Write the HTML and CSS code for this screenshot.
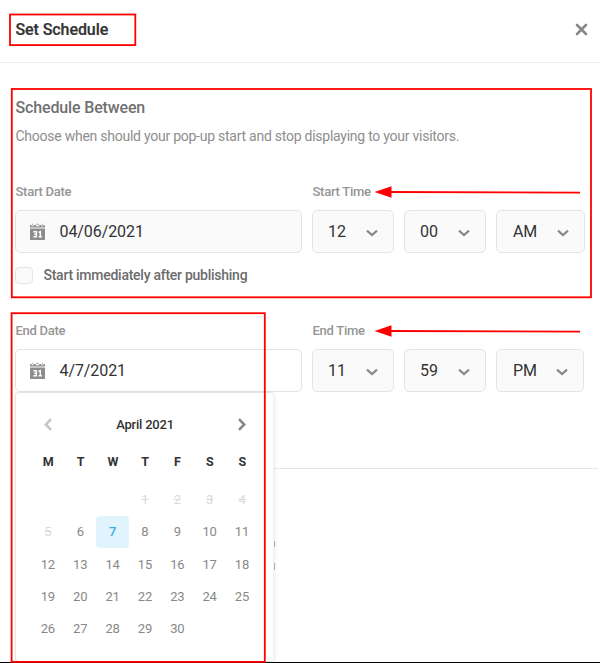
FILE: index.html
```html
<!DOCTYPE html>
<html lang="en">
<head>
<meta charset="utf-8">
<title>Set Schedule</title>
<link rel="stylesheet" href="styles.css">
</head>
<body>
<svg class="defs" width="0" height="0" aria-hidden="true">
  <symbol id="calendar" viewBox="0 0 15 17">
    <path fill="#8d8d8d" d="M0 5.500h15v11.500H0zM0 2h1.600v1.200h2V2h2.200v1.200h3.400V2h2.200v1.200h2V2H15v2.500H0z"/>
    <path fill="none" stroke="#999" stroke-width=".8" d="M2.600 2.400V.6M12.400 2.400V.6M6 1.300h3"/>
    <path fill="none" stroke="#fff" stroke-width="1.400" d="M3.400 8.800h3v5h-3M4.300 11.200h2M8.600 9.500l1.700-.8v5.200M8.700 13.800h3.200"/>
  </symbol>
  <symbol id="chevron" viewBox="0 0 12 8">
    <path fill="none" stroke="#888" stroke-width="2.200" d="M1 1.700l5 4.300 5-4.300"/>
  </symbol>
</svg>
<main class="dialog">
  <header class="head">
    <h1>Set Schedule</h1>
    <svg class="close" width="13" height="13" viewBox="0 0 13 13"><path d="M2 2l9 9M11 2l-9 9"/></svg>
  </header>
  <section class="body">
    <h2>Schedule Between</h2>
    <p class="intro">Choose when should your pop-up start and stop displaying to your visitors.</p>
    <div class="labels"><span>Start Date</span><span>Start Time</span></div>
    <div class="fields">
      <div class="field date"><svg width="15" height="17"><use href="#calendar"/></svg><span>04/06/2021</span></div>
      <div class="field pick"><span>12</span><svg width="12" height="8"><use href="#chevron"/></svg></div>
      <div class="field pick"><span>00</span><svg width="12" height="8"><use href="#chevron"/></svg></div>
      <div class="field pick wide"><span>AM</span><svg width="12" height="8"><use href="#chevron"/></svg></div>
    </div>
    <div class="option"><i class="box"></i><span>Start immediately after publishing</span></div>
    <div class="labels end"><span>End Date</span><span>End Time</span></div>
    <div class="fields">
      <div class="field date active"><svg width="15" height="17"><use href="#calendar"/></svg><span>4/7/2021</span></div>
      <div class="field pick"><span>11</span><svg width="12" height="8"><use href="#chevron"/></svg></div>
      <div class="field pick"><span>59</span><svg width="12" height="8"><use href="#chevron"/></svg></div>
      <div class="field pick wide last"><span>PM</span><svg width="12" height="8"><use href="#chevron"/></svg></div>
      <div class="calendar">
        <div class="month">
          <svg class="prev" width="10" height="13" viewBox="0 0 10 13"><path d="M8 1.200L2.800 6.500 8 11.800"/></svg>
          <span>April 2021</span>
          <svg class="next" width="10" height="13" viewBox="0 0 10 13"><path d="M2 1.200l5.200 5.300L2 11.800"/></svg>
        </div>
        <div class="week"><b>M</b><b>T</b><b>W</b><b>T</b><b>F</b><b>S</b><b>S</b></div>
        <div class="days">
          <span class="past first">1</span><span class="past">2</span><span class="past">3</span><span class="past">4</span>
          <span class="past">5</span><span>6</span><span class="today">7</span><span>8</span><span>9</span><span>10</span><span>11</span>
          <span>12</span><span>13</span><span>14</span><span>15</span><span>16</span><span>17</span><span>18</span>
          <span>19</span><span>20</span><span>21</span><span>22</span><span>23</span><span>24</span><span>25</span>
          <span>26</span><span>27</span><span>28</span><span>29</span><span>30</span>
        </div>
      </div>
    </div>
    <div class="rule"></div>
  </section>
</main>
<svg class="marks" width="600" height="663" viewBox="0 0 600 663">
  <path stroke="#000" stroke-width="1" d="M0 662.500h600"/>
  <path stroke="#aaa" stroke-width="1" d="M274.500 541v6M274.500 563v7"/>
  <g fill="none" stroke="#f00" stroke-width="1.800">
    <rect x="10" y="14.500" width="125.300" height="30.600"/>
    <rect x="11.800" y="89" width="579.200" height="208.300"/>
    <rect x="11.600" y="313.200" width="253.200" height="348.700"/>
    <path d="M388 192l192 .7M388 331l192 .7"/>
  </g>
  <path fill="#f00" d="M374.500 192l17-5.700v11.400zM374.500 331l17-5.700v11.400z"/>
</svg>
</body>
</html>
```
FILE: styles.css
```css
* { box-sizing: border-box; }
body { margin: 0; width: 600px; height: 663px; overflow: hidden; background: #fff; font-family: Roboto, "Liberation Sans", sans-serif; color: #333; }
svg { flex: none; }
.defs { position: absolute; }
.dialog { height: 663px; overflow: hidden; }
.head { height: 63px; padding: 0 12px 4px 15.5px; border-bottom: 1px solid #f0f0f0; display: flex; align-items: center; justify-content: space-between; }
h1 { margin: 2px 0 0; font-size: 16px; line-height: 20px; font-weight: 500; letter-spacing: -.08px; -webkit-text-stroke: .2px; }
.close path { stroke: #888; stroke-width: 2.600; stroke-linecap: round; fill: none; }
.body { padding: 35px 15px 0; }
h2 { margin: 0; padding-left: .5px; font-size: 16px; line-height: 20px; font-weight: 500; color: #707070; letter-spacing: -.15px; }
.intro { margin: 8px 0 0; padding-left: .5px; font-size: 14px; line-height: 20px; color: #8d8d8d; letter-spacing: -.25px; white-space: nowrap; }
.labels { display: grid; grid-template-columns: 297px 1fr; margin-top: 38px; height: 16px; padding-left: .5px; font-size: 13px; line-height: 16px; font-weight: 500; color: #959595; letter-spacing: -.27px; }
.labels.end { margin-top: 39px; }
.fields { position: relative; display: flex; margin-top: 10px; }
.field { height: 43px; display: flex; align-items: center; border: 1px solid #e4e4e4; border-radius: 5px; background: #fafafa; font-size: 16px; }
.date { width: 287px; padding-left: 14px; gap: 14.5px; margin-right: 10px; }
.date span { letter-spacing: -.08px; }
.active { background: #fff; }
.pick { width: 82px; padding: 0 15px; justify-content: space-between; margin-right: 10px; }
.pick svg { margin-top: 3px; }
.wide { width: 89px; padding-left: 16px; margin-right: 0; }
.wide span { letter-spacing: -.1px; }
.last { width: 88px; }
.option { display: flex; align-items: center; height: 18px; margin-top: 13px; gap: 10.5px; font-size: 14px; line-height: 18px; font-weight: 500; color: #6c6c6c; letter-spacing: -.26px; }
.box { width: 18px; height: 17px; border: 1px solid #e4e4e4; border-radius: 4px; background: #fafafa; }
.calendar { position: absolute; z-index: 1; left: 0; top: 43px; width: 259px; height: 270px; padding: 17px 16px 0; background: #fff; border: 1px solid #e5e5e5; border-right-color: #f2f2f2; border-radius: 4px; box-shadow: 1px 1px 4px rgba(0,0,0,.07); }
.month { display: flex; align-items: center; justify-content: space-between; height: 29px; padding: 0 10px 0 11px; font-size: 13px; font-weight: 500; letter-spacing: -.22px; }
.month path { fill: none; stroke: #888; stroke-width: 2.600; }
.month .prev path { stroke: #c6c6c6; }
.week, .days { display: grid; grid-template-columns: repeat(7, 32.350px); text-align: center; }
.week { margin-top: 14px; height: 18px; font-size: 12.5px; line-height: 18px; }
.week b { font-weight: 700; }
.days { margin: 13px 0 0 -.3px; grid-auto-rows: 32.350px; font-size: 13px; line-height: 32px; color: #888; letter-spacing: -.2px; }
.past { color: #dadada; text-decoration: line-through; }
.first { grid-column: 4; }
.today { color: #37ade5; background: #e1f4fd; border-radius: 4px; height: 32px; font-weight: 500; }
.rule { height: 1px; margin-top: 76px; margin-right: -13px; background: #e6e6e6; }
.marks { position: absolute; inset: 0; z-index: 2; pointer-events: none; }
```
